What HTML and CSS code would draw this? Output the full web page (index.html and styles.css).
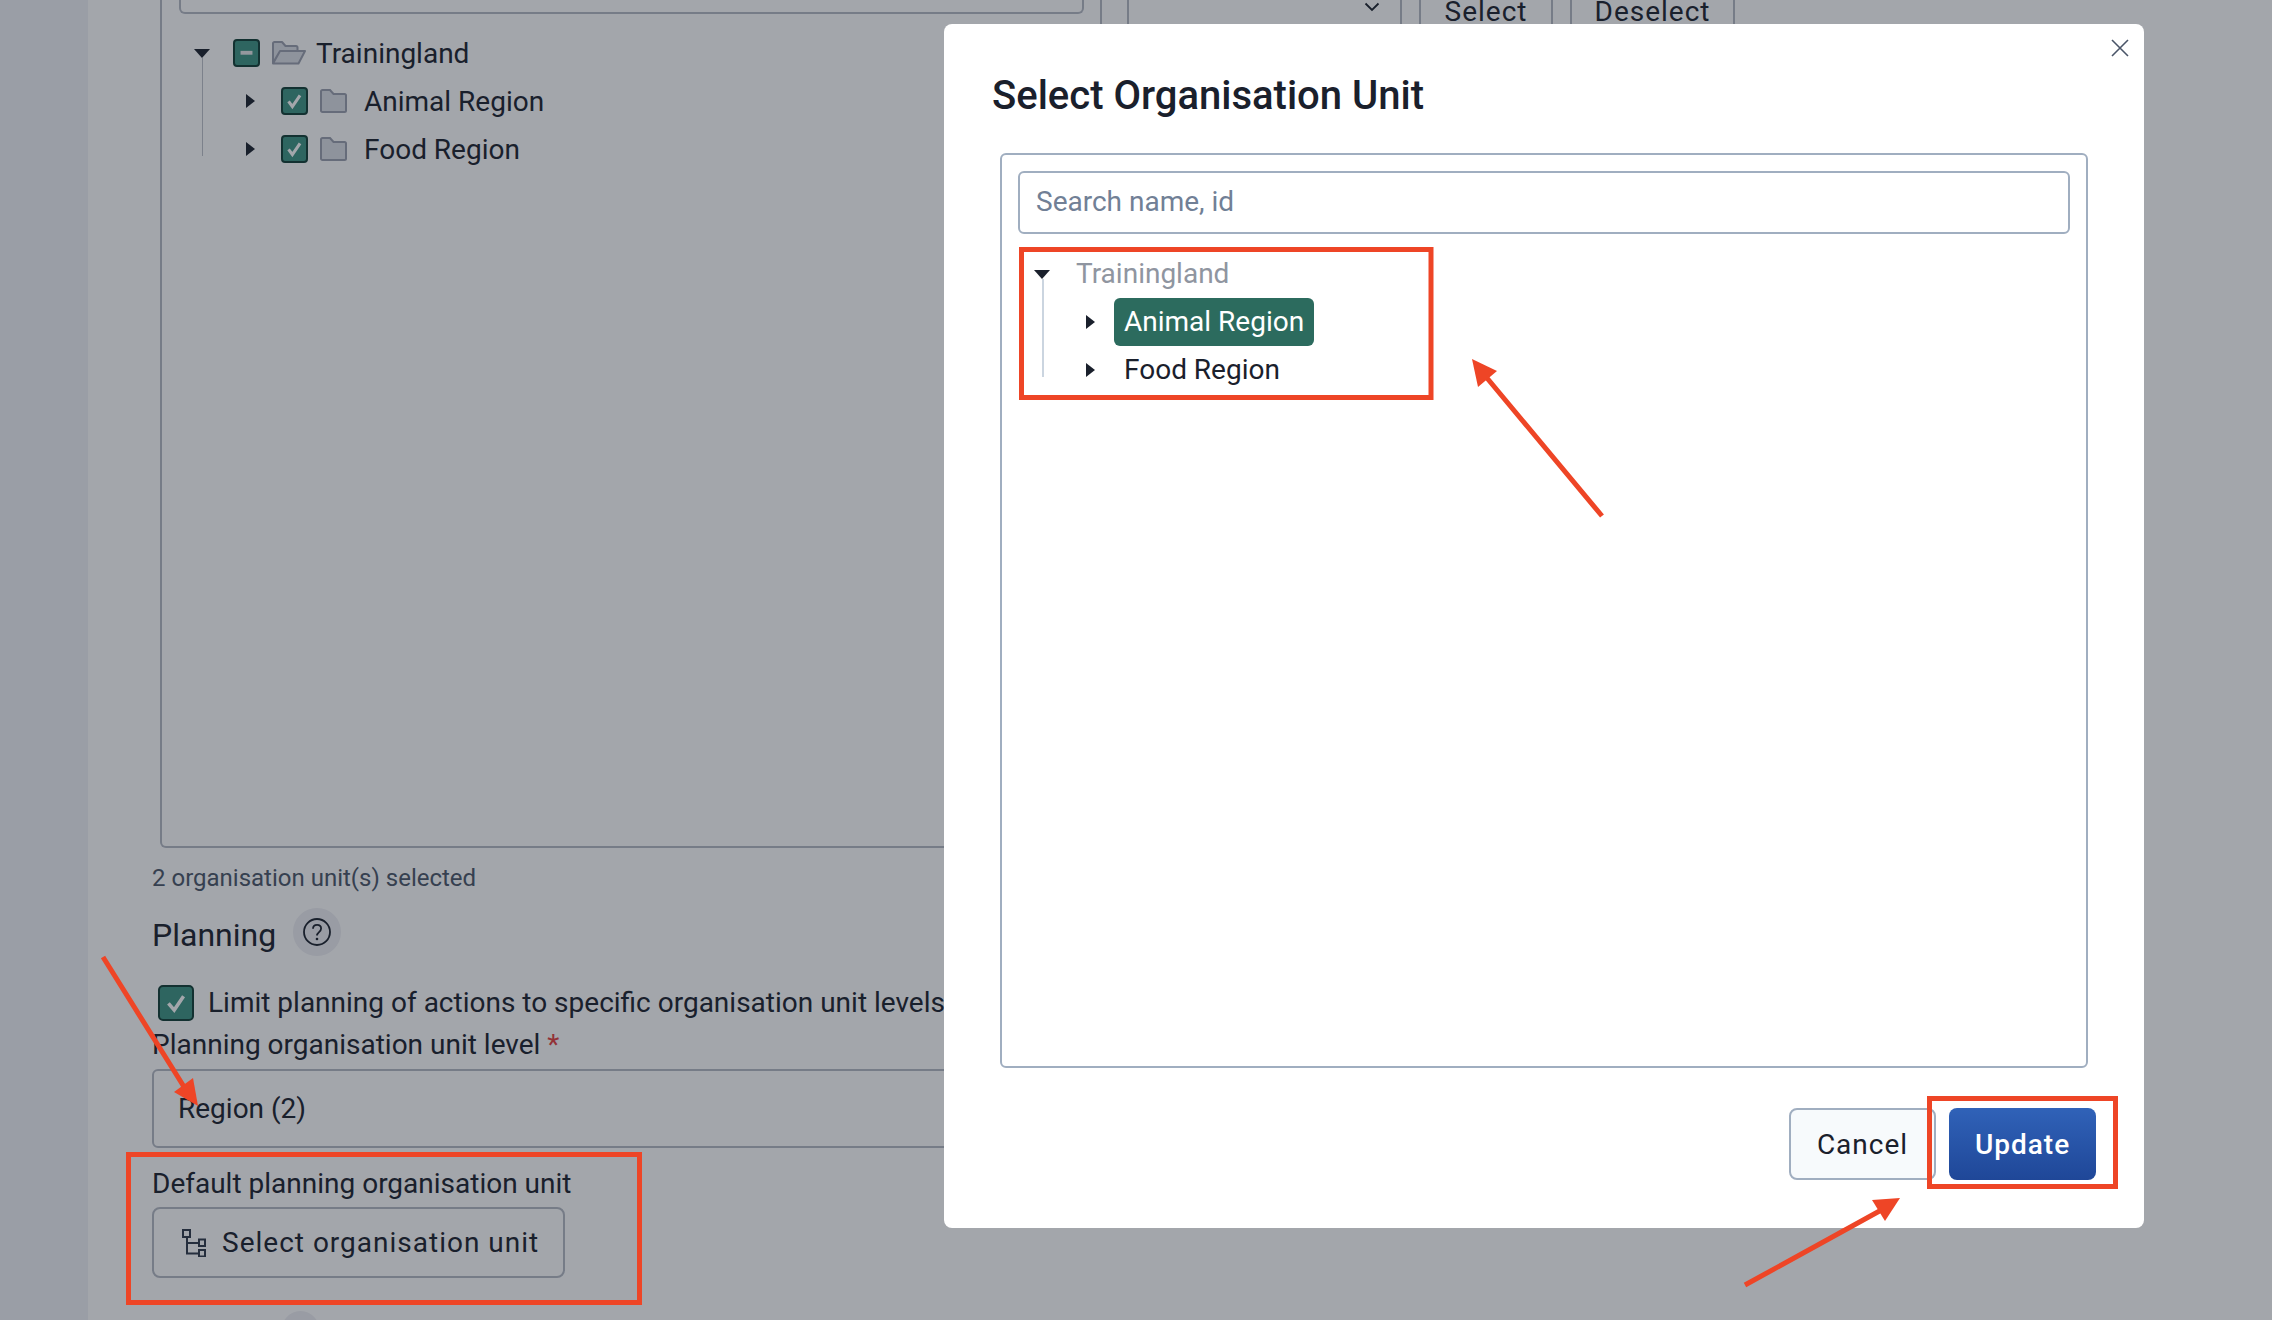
FILE: index.html
```html
<!DOCTYPE html>
<html lang="en">
<head>
  <meta charset="UTF-8">
  <title>Select Organisation Unit</title>
  <link rel="stylesheet" href="styles.css">
</head>
<body>
  <div class="sidebar"></div>

  <main class="content">
    <div class="top-row">
      <section class="org-panel">
        <div class="panel-search"></div>
        <div class="tree">
          <div class="tree-row">
            <span class="caret-slot"><i class="caret-down"></i></span>
            <span class="check"><svg viewBox="0 0 27 28"><rect x="6.500" y="11.500" width="14" height="4.500" fill="#e6e8ea"/></svg></span>
            <svg class="folder" viewBox="0 0 34 24"><path d="M1 22V2.500C1 1.600 1.600 1 2.500 1H10l3.500 4H24c.9 0 1.500.6 1.500 1.500V10H8L1 22zM1 22.500L8 10h25l-6.500 12.500H1z" fill="#dddfe6" stroke="#999ead" stroke-width="2" stroke-linejoin="round"/></svg>
            <span class="tree-text">Trainingland</span>
          </div>
          <div class="tree-children">
            <div class="tree-row">
              <span class="caret-slot"><i class="caret-right"></i></span>
              <span class="check"><svg viewBox="0 0 27 28"><path d="M6.500 14.500l4.500 6 9-13" fill="none" stroke="#fff" stroke-width="3.600"/></svg></span>
              <svg class="folder" viewBox="0 0 34 24"><path d="M1 21.500V2.500C1 1.600 1.600 1 2.500 1H10l3.500 4H24.500c.9 0 1.500.6 1.500 1.500v15c0 .9-.6 1.500-1.500 1.500h-22C1.600 23 1 22.400 1 21.500z" fill="#dddfe6" stroke="#999ead" stroke-width="2"/></svg>
              <span class="tree-text">Animal Region</span>
            </div>
            <div class="tree-row">
              <span class="caret-slot"><i class="caret-right"></i></span>
              <span class="check"><svg viewBox="0 0 27 28"><path d="M6.500 14.500l4.500 6 9-13" fill="none" stroke="#fff" stroke-width="3.600"/></svg></span>
              <svg class="folder" viewBox="0 0 34 24"><path d="M1 21.500V2.500C1 1.600 1.600 1 2.500 1H10l3.500 4H24.500c.9 0 1.500.6 1.500 1.500v15c0 .9-.6 1.500-1.500 1.500h-22C1.600 23 1 22.400 1 21.500z" fill="#dddfe6" stroke="#999ead" stroke-width="2"/></svg>
              <span class="tree-text">Food Region</span>
            </div>
          </div>
        </div>
      </section>
      <div class="panel-actions">
        <div class="level-select"><svg class="chevron" viewBox="0 0 16 10"><path d="M1.500 1.500L8 8l6.500-6.500" fill="none" stroke="#1a202c" stroke-width="1.800"/></svg></div>
        <button class="ghost-btn select-btn">Select</button>
        <button class="ghost-btn deselect-btn">Deselect</button>
      </div>
    </div>

    <p class="selected-count">2 organisation unit(s) selected</p>

    <div class="section-head">
      <h3 class="section-title">Planning</h3>
      <span class="help-btn">
        <svg viewBox="0 0 28 28"><circle cx="14" cy="14" r="13" fill="none" stroke="#1a202c" stroke-width="1.800"/><path d="M10 10.800c0-2.400 1.800-4 4.100-4s4 1.500 4 3.700c0 3.500-4.100 3.600-4.100 7" fill="none" stroke="#1a202c" stroke-width="1.800"/><circle cx="14" cy="21" r="1.300" fill="#1a202c"/></svg>
      </span>
    </div>

    <label class="limit-row">
      <span class="check check-lg"><svg viewBox="0 0 35 36"><path d="M9 18.500l6.500 7.500 10.500-15.500" fill="none" stroke="#fff" stroke-width="4"/></svg></span>
      <span class="limit-text">Limit planning of actions to specific organisation unit levels</span>
    </label>

    <div class="field-label level-label">Planning organisation unit level <span class="required">*</span></div>
    <div class="select-box">Region (2)</div>

    <div class="field-label default-label">Default planning organisation unit</div>
    <button class="org-btn">
      <svg class="org-icon" viewBox="0 0 24 28"><path d="M5 7v17.500h12M5 14h12" fill="none" stroke="#2d3748" stroke-width="2"/><rect x="1" y="1" width="7" height="7" fill="none" stroke="#2d3748" stroke-width="2"/><rect x="17" y="10.500" width="6" height="6.500" fill="none" stroke="#2d3748" stroke-width="2"/><rect x="17" y="21" width="6" height="6.500" fill="none" stroke="#2d3748" stroke-width="2"/></svg>
      Select organisation unit
    </button>
    <div class="next-help"></div>
  </main>

  <div class="overlay"></div>

  <div class="modal">
    <svg class="close-icon" viewBox="0 0 18 18"><path d="M1 1l16 16M17 1L1 17" fill="none" stroke="#4a5568" stroke-width="1.600"/></svg>
    <h2 class="modal-title">Select Organisation Unit</h2>
    <div class="modal-body">
      <input class="search-input" type="text" placeholder="Search name, id">
      <div class="modal-tree">
        <div class="unit-row">
          <span class="unit-caret"><i class="caret-down"></i></span>
          <span class="unit-label unit-disabled">Trainingland</span>
        </div>
        <div class="unit-children">
          <div class="unit-row">
            <span class="unit-caret"><i class="caret-right"></i></span>
            <span class="unit-label unit-selected">Animal Region</span>
          </div>
          <div class="unit-row">
            <span class="unit-caret"><i class="caret-right"></i></span>
            <span class="unit-label">Food Region</span>
          </div>
        </div>
      </div>
    </div>
    <div class="modal-footer">
      <button class="btn-cancel">Cancel</button>
      <button class="btn-update">Update</button>
    </div>
  </div>

  <!-- red callouts drawn on top of the screenshot -->
  <svg class="callouts" viewBox="0 0 2272 1320">
    <g fill="none" stroke="#ee4526" stroke-width="5">
      <rect x="1021.500" y="249.500" width="409.500" height="148"/>
      <rect x="1929.500" y="1098.500" width="186" height="88"/>
      <rect x="128.500" y="1154.500" width="511" height="148"/>
      <path d="M1602 516L1482 372M1745 1285L1885 1208M103 957L186 1090"/>
    </g>
    <g fill="#ee4526">
      <path d="M1472 359L1497 371L1478 387Z"/>
      <path d="M1900 1198L1872 1200L1885 1221Z"/>
      <path d="M198 1106L174 1092L193 1078Z"/>
    </g>
  </svg>
</body>
</html>
```

FILE: styles.css
```css
html, body {
  margin: 0;
  height: 1320px;
  overflow: hidden;
}
body {
  display: flex;
  position: relative;
  font-family: Roboto, sans-serif;
  font-size: 28px;
  color: #1a202c;
  background: #fff;
}
button {
  font-family: inherit;
  cursor: pointer;
}

.sidebar {
  width: 88px;
  flex-shrink: 0;
  background: #f1f2f7;
}
.content {
  flex: 1;
  padding-left: 64px;
}

/* page behind the modal */
.top-row {
  display: flex;
  height: 848px;
  margin-left: 8px;
}
.org-panel {
  width: 942px;
  box-sizing: border-box;
  border: 2px solid #b4b9c4;
  border-top: 0;
  border-radius: 0 0 6px 6px;
}
.panel-search {
  width: 905px;
  height: 14px;
  box-sizing: border-box;
  margin-left: 17px;
  border: 2px solid #b4b9c4;
  border-top: 0;
  border-radius: 0 0 6px 6px;
}
.tree {
  margin-top: 15px;
  margin-left: 24px;
}
.tree-row {
  display: flex;
  align-items: center;
  height: 48px;
}
.tree-children {
  position: relative;
  padding-left: 48px;
}
.tree-children::before {
  content: "";
  position: absolute;
  left: 16px;
  top: -19px;
  bottom: 17px;
  width: 1px;
  background: #bec1ca;
}
.caret-slot {
  width: 32px;
  display: flex;
  justify-content: center;
  flex-shrink: 0;
}
.caret-down {
  display: block;
  border-left: 8px solid transparent;
  border-right: 8px solid transparent;
  border-top: 9px solid #1a202c;
}
.caret-right {
  display: block;
  border-top: 7px solid transparent;
  border-bottom: 7px solid transparent;
  border-left: 9px solid #1a202c;
}
.check {
  display: flex;
  width: 27px;
  height: 28px;
  box-sizing: border-box;
  margin-left: 15px;
  background: #3d9382;
  border: 2px solid #0f3d34;
  border-radius: 4px;
  flex-shrink: 0;
  overflow: hidden;
}
.check svg {
  width: 100%;
  height: 100%;
}
.folder {
  width: 34px;
  height: 24px;
  margin-left: 12px;
  flex-shrink: 0;
}
.tree-text {
  margin-left: 10px;
}

.panel-actions {
  display: flex;
  align-items: flex-start;
  margin-left: 25px;
}
.level-select {
  width: 275px;
  height: 24px;
  box-sizing: border-box;
  border-left: 2px solid #b4b9c4;
  border-right: 2px solid #b4b9c4;
}
.chevron {
  display: block;
  width: 16px;
  height: 10px;
  margin: 2px 0 0 235px;
}
.ghost-btn {
  height: 24px;
  margin-left: 17px;
  padding: 0;
  background: none;
  border: 0;
  border-left: 2px solid #b4b9c4;
  border-right: 2px solid #b4b9c4;
  font-size: 28px;
  color: #1a202c;
  letter-spacing: 1px;
  line-height: 16px;
  overflow: hidden;
}
.select-btn {
  width: 134px;
}
.deselect-btn {
  width: 165px;
}

.selected-count {
  margin: 14px 0 0;
  line-height: 32px;
  font-size: 24px;
  color: #4a5568;
}
.section-head {
  display: flex;
  align-items: center;
  margin-top: 14px;
  height: 48px;
}
.section-title {
  margin: 0;
  font-size: 32px;
  font-weight: 400;
  position: relative;
  top: 3px;
}
.help-btn {
  display: flex;
  align-items: center;
  justify-content: center;
  width: 48px;
  height: 48px;
  margin-left: 17px;
  border-radius: 50%;
  background: #eeeef3;
}
.help-btn svg {
  width: 28px;
  height: 28px;
}
.limit-row {
  display: flex;
  align-items: center;
  margin-top: 29px;
  height: 36px;
  white-space: nowrap;
}
.check-lg {
  width: 36px;
  height: 36px;
  margin-left: 6px;
  border-radius: 5px;
}
.limit-text {
  margin-left: 14px;
  margin-bottom: 2px;
}
.field-label {
  line-height: 36px;
}
.level-label {
  margin-top: 6px;
}
.required {
  color: #e53e3e;
}
.select-box {
  width: 950px;
  height: 79px;
  box-sizing: border-box;
  margin-top: 6px;
  padding-left: 24px;
  border: 2px solid #b4b9c4;
  border-radius: 6px;
  line-height: 75px;
}
.default-label {
  margin-top: 18px;
}
.org-btn {
  display: flex;
  align-items: center;
  width: 413px;
  height: 71px;
  box-sizing: border-box;
  margin-top: 5px;
  padding: 0 0 0 28px;
  background: none;
  border: 2px solid #b4b9c4;
  border-radius: 8px;
  font-size: 28px;
  letter-spacing: 1px;
  color: #1a202c;
}
.org-icon {
  width: 24px;
  height: 28px;
  margin-right: 16px;
}
.next-help {
  width: 41px;
  height: 48px;
  margin: 33px 0 0 128px;
  border-radius: 50%;
  background: #eeeef3;
}

/* dim layer, modal and callouts */
.overlay {
  position: absolute;
  inset: 0;
  background: rgba(26, 32, 44, 0.4);
}
.modal {
  position: absolute;
  left: 944px;
  top: 24px;
  width: 1200px;
  height: 1204px;
  box-sizing: border-box;
  padding: 49px 48px 0 56px;
  background: #fff;
  border-radius: 8px;
}
.close-icon {
  position: absolute;
  right: 15px;
  top: 15px;
  width: 18px;
  height: 18px;
}
.modal-title {
  margin: 0 0 0 -8px;
  font-size: 40px;
  font-weight: 500;
  line-height: 46px;
}
.modal-body {
  width: 1088px;
  height: 915px;
  box-sizing: border-box;
  margin-top: 34px;
  padding: 16px;
  border: 2px solid #a0aec0;
  border-radius: 6px;
}
.search-input {
  display: block;
  width: 100%;
  height: 63px;
  box-sizing: border-box;
  padding: 0 16px 3px;
  border: 2px solid #a0aec0;
  border-radius: 6px;
  font-family: inherit;
  font-size: 28px;
  outline: none;
}
.search-input::placeholder {
  color: #718096;
  opacity: 1;
}
.modal-tree {
  margin: 16px 0 0 8px;
}
.unit-row {
  display: flex;
  align-items: center;
  height: 48px;
}
.unit-caret {
  width: 32px;
  display: flex;
  justify-content: center;
  flex-shrink: 0;
}
.unit-children {
  position: relative;
  padding-left: 48px;
}
.unit-children::before {
  content: "";
  position: absolute;
  left: 16px;
  top: -19px;
  bottom: 17px;
  width: 2px;
  background: #cbd5e0;
}
.unit-label {
  margin-left: 8px;
  padding: 0 10px;
  line-height: 48px;
  border-radius: 6px;
}
.unit-disabled {
  color: #8f95a0;
}
.unit-selected {
  background: #2c6b5e;
  color: #fff;
}
.modal-footer {
  display: flex;
  justify-content: flex-end;
  gap: 13px;
  margin-top: 40px;
}
.btn-cancel,
.btn-update {
  height: 72px;
  padding: 0;
  border-radius: 8px;
  font-size: 28px;
  letter-spacing: 1px;
}
.btn-cancel {
  width: 147px;
  background: #f7fafc;
  border: 2px solid #a0aec0;
  color: #1a202c;
}
.btn-update {
  width: 147px;
  border: 0;
  font-weight: 500;
  color: #fff;
  background: linear-gradient(#3062b8, #1f4798);
}
.callouts {
  position: absolute;
  left: 0;
  top: 0;
  width: 2272px;
  height: 1320px;
  pointer-events: none;
}
```
